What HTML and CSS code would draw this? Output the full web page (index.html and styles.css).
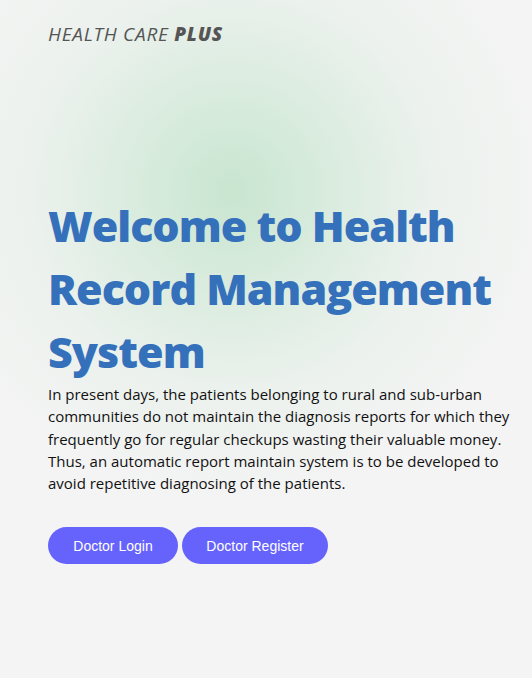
FILE: index.html
```html
<!DOCTYPE html>
<html>
<head>
<meta charset="utf-8">
<link rel="stylesheet" href="styles.css">
</head>
<body>
<div class="page">
  <header class="brand">HEALTH CARE <b>PLUS</b></header>
  <main class="hero">
    <h1 class="title">Welcome to Health Record Management System</h1>
    <p class="lead">In present days, the patients belonging to rural and sub-urban communities do not maintain the diagnosis reports for which they frequently go for regular checkups wasting their valuable money. Thus, an automatic report maintain system is to be developed to avoid repetitive diagnosing of the patients.</p>
    <div class="actions">
      <button class="btn btn-login">Doctor Login</button>
      <button class="btn btn-register">Doctor Register</button>
    </div>
  </main>
</div>
</body>
</html>
```
FILE: styles.css
```css
html, body {
  margin: 0;
  padding: 0;
}
body {
  width: 532px;
  height: 678px;
  overflow: hidden;
  background: #f4f4f4;
}
.page {
  height: 678px;
  box-sizing: border-box;
  padding: 22px 0 0 48px;
  background:
    radial-gradient(ellipse 320px 320px at 232px 190px, rgba(200, 229, 208, 1) 0%, rgba(212, 234, 218, 0.85) 30%, rgba(228, 239, 231, 0.55) 62%, rgba(244, 244, 244, 0) 100%),
    #f4f4f4;
}
.brand {
  font-family: "Open Sans", sans-serif;
  font-style: italic;
  font-size: 19px;
  font-weight: 400;
  color: #555;
  letter-spacing: 0.75px;
  line-height: 24px;
}
.brand b {
  font-weight: 800;
}
.hero {
  margin-top: 148px;
}
.title {
  margin: 0;
  font-family: "Open Sans", sans-serif;
  font-weight: 800;
  font-size: 43px;
  line-height: 63px;
  color: #3571bb;
  width: 484px;
  letter-spacing: -1px;
}
.lead {
  margin: 0;
  font-family: "Open Sans", sans-serif;
  font-size: 15px;
  line-height: 22.3px;
  color: #111;
  width: 480px;
}
.actions {
  margin-top: 33px;
  display: flex;
  gap: 4px;
}
.btn {
  height: 37px;
  border: 0;
  border-radius: 19px;
  background: #6663fc;
  color: #fff;
  font-family: "Liberation Sans", Arial, sans-serif;
  font-size: 14px;
  padding: 0;
}
.btn-login { width: 130px; }
.btn-register { width: 146px; }
```
